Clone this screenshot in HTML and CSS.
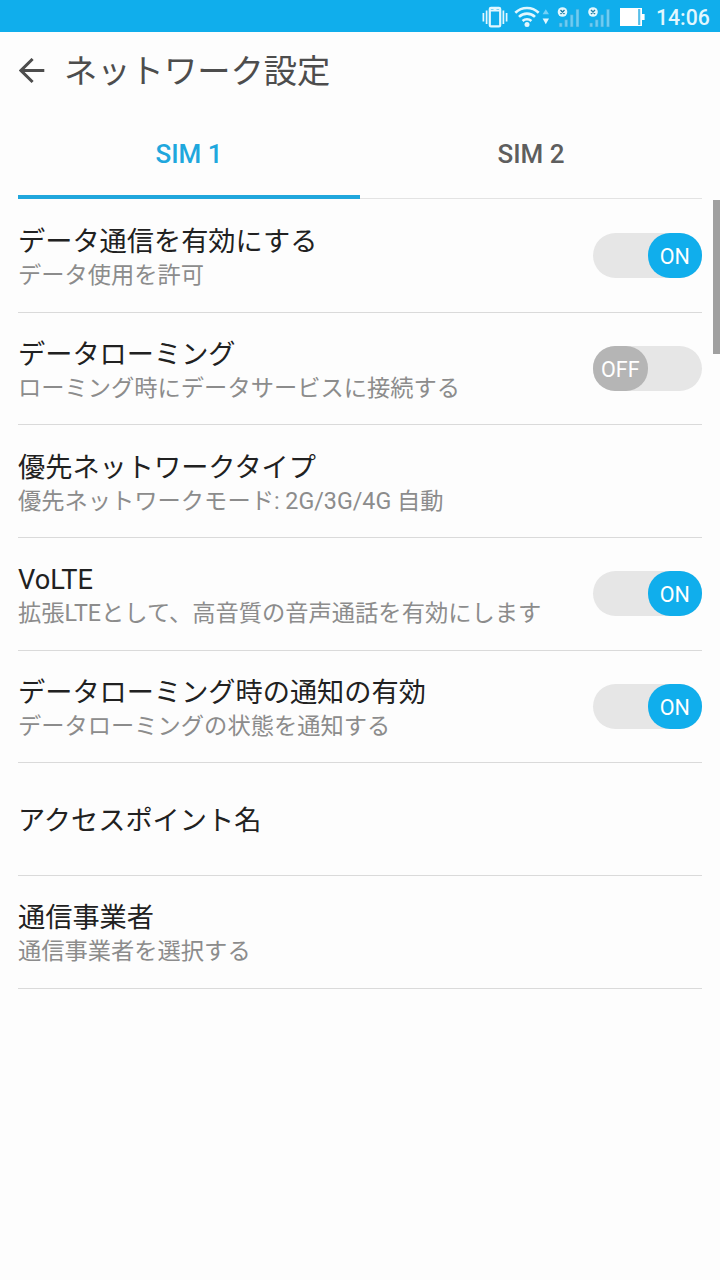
FILE: index.html
```html
<!DOCTYPE html>
<html lang="ja">
<head>
    <meta charset="UTF-8">
    <meta name="viewport" content="width=device-width, initial-scale=1.0">
    <title>ネットワーク設定</title>
    <link rel="stylesheet" href="styles.css">
</head>
<body>
<div class="status-bar">
    <svg class="status-icons" width="168" height="32" viewBox="478 0 168 32">
        <!-- vibrate -->
        <g fill="none" stroke="#e2f7fe" stroke-width="1.7">
            <rect x="489.8" y="7.8" width="10.4" height="18.6" rx="1.2" stroke-width="2.2"/>
            <path d="M490 10.5h10M493.5 8.7h3" stroke-width="1.8"/>
            <path d="M486.6 10.5v13.5M483.4 13v8.5M503.4 10.5v13.5M506.6 13v8.5"/>
        </g>
        <!-- wifi -->
        <g fill="none" stroke="#e2f7fe" stroke-width="2.6">
            <path d="M515.3 12.7a16.8 16.8 0 0 1 23.4 0"/>
            <path d="M519 16.9a11.4 11.4 0 0 1 16 0"/>
            <path d="M522.6 21a6.4 6.4 0 0 1 8.8 0"/>
        </g>
        <circle cx="527" cy="24.6" r="2.5" fill="#e2f7fe"/>
        <path d="M542.6 14.2l3.2-5 3.2 5z" fill="#74d1f7"/>
        <path d="M542.6 18.6l3.2 5.6 3.2-5.6z" fill="#e2f7fe"/>
        <!-- SIM signals -->
        <g fill="#6fcdf4" stroke="#3ba6d3" stroke-width=".5">
            <path d="M559.2 22.9h3v4h-3zM564.7 19.7h3v7.2h-3zM570.2 14.7h3v12.2h-3zM576 9.3h3v17.6h-3z"/>
            <path d="M589.7 22.9h3v4h-3zM595.2 19.7h3v7.2h-3zM600.7 14.7h3v12.2h-3zM606.5 9.3h3v17.6h-3z"/>
        </g>
        <g fill="#e2f7fe">
            <circle cx="562.5" cy="12" r="4.8"/>
            <circle cx="593" cy="12" r="4.8"/>
        </g>
        <path d="M560.5 10l4 4m0-4l-4 4M591 10l4 4m0-4l-4 4" stroke="#237fa5" stroke-width="1.4"/>
        <!-- battery -->
        <path d="M620 8h22v6h2.6v6H642v6h-22z" fill="#fff"/>
        <path d="M639.2 9v16" stroke="#58bfe9" stroke-width="2.2"/>
    </svg>
    <span class="clock">14:06</span>
</div>

<div class="header">
    <svg class="back" width="26" height="26" viewBox="0 0 26 26">
        <path d="M13.6 1L2 12.5 13.6 24M2 12.5h23.3" fill="none" stroke="#4d4d4d" stroke-width="3"/>
    </svg>
    <h1>ネットワーク設定</h1>
</div>

<div class="tabs">
    <div class="tab active">SIM 1</div>
    <div class="tab">SIM 2</div>
</div>

<div class="settings">
    <div class="row">
        <div class="text">
            <h2>データ通信を有効にする</h2>
            <p>データ使用を許可</p>
        </div>
        <div class="switch on"><span>ON</span></div>
    </div>
    <div class="row">
        <div class="text">
            <h2>データローミング</h2>
            <p>ローミング時にデータサービスに接続する</p>
        </div>
        <div class="switch"><span>OFF</span></div>
    </div>
    <div class="row">
        <div class="text">
            <h2>優先ネットワークタイプ</h2>
            <p>優先ネットワークモード: 2G/3G/4G 自動</p>
        </div>
    </div>
    <div class="row">
        <div class="text">
            <h2>VoLTE</h2>
            <p>拡張LTEとして、高音質の音声通話を有効にします</p>
        </div>
        <div class="switch on"><span>ON</span></div>
    </div>
    <div class="row">
        <div class="text">
            <h2>データローミング時の通知の有効</h2>
            <p>データローミングの状態を通知する</p>
        </div>
        <div class="switch on"><span>ON</span></div>
    </div>
    <div class="row">
        <div class="text">
            <h2>アクセスポイント名</h2>
        </div>
    </div>
    <div class="row">
        <div class="text">
            <h2>通信事業者</h2>
            <p>通信事業者を選択する</p>
        </div>
    </div>
</div>
<div class="scrollbar"></div>
</body>
</html>
```
FILE: styles.css
```css
* {
    margin: 0;
    padding: 0;
    box-sizing: border-box;
}

body {
    position: relative;
    height: 1280px;
    overflow: hidden;
    background-color: #fdfdfd;
    font-family: Roboto, "Noto Sans CJK JP", sans-serif;
}

.status-bar {
    display: flex;
    justify-content: flex-end;
    align-items: center;
    height: 32px;
    padding-right: 11px;
    background-color: #10aeec;
}

.clock {
    width: 53px;
    margin-left: 10px;
    padding-top: 3px;
    color: #e2f7fe;
    font-size: 21.2px;
    line-height: 29px;
    font-weight: 500;
    white-space: nowrap;
}

.header {
    display: flex;
    align-items: center;
    height: 77px;
    padding-left: 19px;
}

.header h1 {
    margin-left: 19px;
    padding-top: 2px;
    color: #4d4d4d;
    font-size: 33.3px;
    line-height: 40px;
    font-weight: 400;
}

.tabs {
    display: flex;
    height: 90px;
    margin: 0 18px;
    border-bottom: 1px solid #e3e3e3;
}

.tab {
    flex: 1;
    height: 90px;
    color: #5e5e5e;
    font-size: 26px;
    line-height: 91px;
    font-weight: 500;
    text-align: center;
}

.tab.active {
    color: #20a7dd;
    border-bottom: 4px solid #20a7dd;
}

.settings {
    margin: 0 18px;
    padding-top: 1px;
}

.row {
    display: flex;
    justify-content: space-between;
    align-items: center;
    height: 112.7px;
    border-bottom: 1px solid #dadada;
}

.text {
    padding-top: 5px;
}

.row h2 {
    color: #212121;
    font-size: 27.2px;
    line-height: 35px;
    font-weight: 400;
}

.row p {
    margin-top: -1px;
    color: #8c8c8c;
    font-size: 23.27px;
    line-height: 32px;
    font-weight: 400;
}

.switch {
    width: 109px;
    height: 45px;
    border-radius: 22.5px;
    background-color: #e6e6e6;
}

.switch span {
    display: block;
    width: 54.5px;
    height: 45px;
    border-radius: 22px;
    background-color: #b5b5b5;
    color: #fff;
    font-size: 21.5px;
    line-height: 48px;
    text-align: center;
}

.switch.on span {
    margin-left: auto;
    background-color: #10aeec;
}

.scrollbar {
    position: absolute;
    top: 200px;
    right: 0;
    width: 7px;
    height: 154px;
    background-color: #a0a0a0;
}
```
